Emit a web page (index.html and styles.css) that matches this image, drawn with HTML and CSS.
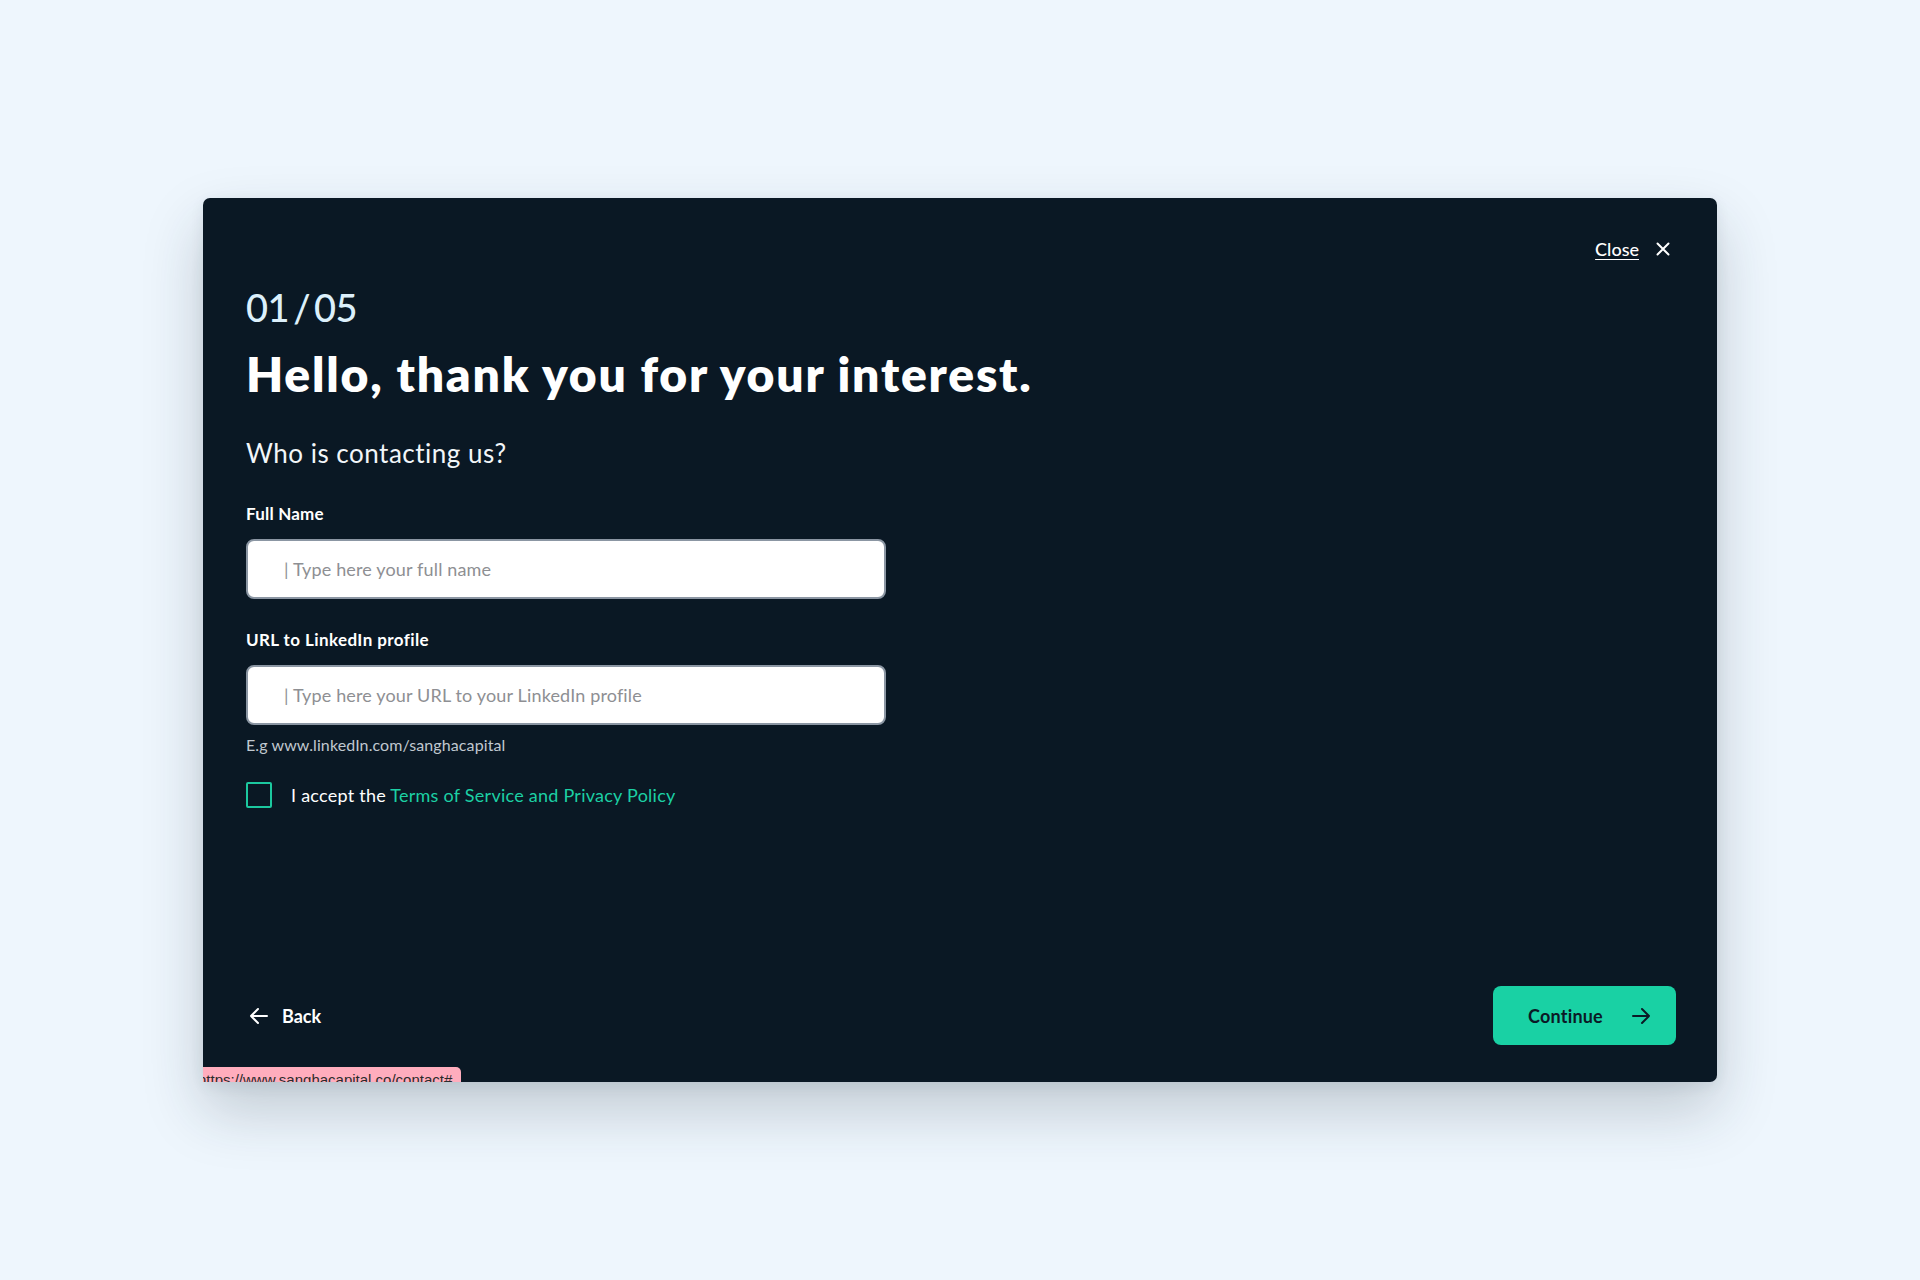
FILE: index.html
```html
<!DOCTYPE html>
<html lang="en">
<head>
<meta charset="utf-8">
<title>Contact – Sangha Capital</title>
<link rel="stylesheet" href="styles.css">
</head>
<body>
<div class="modal">
  <div class="close-row">
    <a class="close-link" href="#">Close</a>
    <svg class="close-icon" width="14" height="14" viewBox="0 0 14 14"><path d="M1.5 1.5 L12.5 12.5 M12.5 1.5 L1.5 12.5" stroke="#ffffff" stroke-width="2" stroke-linecap="round" fill="none"/></svg>
  </div>
  <div class="step">01 / 05</div>
  <h1 class="title">Hello, thank you for your interest.</h1>
  <h2 class="subtitle">Who is contacting us?</h2>

  <label class="field-label">Full Name</label>
  <div class="input"><span class="placeholder">| Type here your full name</span></div>

  <label class="field-label second">URL to LinkedIn profile</label>
  <div class="input"><span class="placeholder">| Type here your URL to your LinkedIn profile</span></div>
  <div class="hint">E.g www.linkedIn.com/sanghacapital</div>

  <div class="accept">
    <span class="checkbox"></span>
    <span class="accept-text">I accept the <a href="#" class="terms">Terms of Service and Privacy Policy</a></span>
  </div>

  <div class="footer">
    <a class="back" href="#">
      <svg width="20" height="18" viewBox="0 0 20 18"><path d="M18 9 H2 M9 2 L2 9 L9 16" stroke="#ffffff" stroke-width="2" stroke-linecap="round" stroke-linejoin="round" fill="none"/></svg>
      <span>Back</span>
    </a>
    <a class="continue" href="#">
      <span>Continue</span>
      <svg width="20" height="18" viewBox="0 0 20 18"><path d="M2 9 H18 M11 2 L18 9 L11 16" stroke="#0b1a26" stroke-width="2" stroke-linecap="round" stroke-linejoin="round" fill="none"/></svg>
    </a>
  </div>

  <div class="status"><span>https://www.sanghacapital.co/contact#</span></div>
</div>
</body>
</html>
```
FILE: styles.css
```css
* { box-sizing: border-box; }
html, body { margin: 0; padding: 0; }
body {
  background: #eef6fd;
  height: 100vh;
  display: flex;
  align-items: center;
  justify-content: center;
  font-family: "Lato", "Noto Sans", sans-serif;
}
.modal {
  position: relative;
  width: 1514px;
  height: 884px;
  background: #0a1824;
  border-radius: 7px;
  box-shadow: 0 28px 60px rgba(30, 45, 60, 0.22), 0 4px 14px rgba(30, 45, 60, 0.08);
  padding: 39px 41px 37px 43px;
  display: flex;
  flex-direction: column;
  color: #ffffff;
}
.close-row {
  display: flex;
  justify-content: flex-end;
  align-items: center;
  height: 24px;
  gap: 17px;
  margin-right: 6px;
}
.close-link {
  color: #ffffff;
  font-size: 18px;
  font-weight: 500;
  text-decoration: underline;
  text-underline-offset: 3px;
}
.close-icon { display: block; }
.step {
  margin-top: 23px;
  font-size: 38px;
  line-height: 46px;
  color: #dcf0fb;
  font-weight: 500;
  word-spacing: -5px;
  letter-spacing: -0.5px;
}
.title {
  margin: 16px 0 0;
  font-size: 48px;
  line-height: 56px;
  font-weight: 800;
  letter-spacing: 1.8px;
}
.subtitle {
  margin: 35px 0 0;
  font-size: 26px;
  line-height: 32px;
  font-weight: 400;
  color: #f2f6f9;
  letter-spacing: 0.5px;
}
.field-label {
  display: block;
  margin-top: 34px;
  font-size: 17px;
  line-height: 22px;
  font-weight: 700;
  letter-spacing: 0.2px;
}
.field-label.second { margin-top: 30px; letter-spacing: 0.4px; }
.input {
  margin-top: 14px;
  width: 640px;
  height: 60px;
  background: #ffffff;
  border: 2px solid #8b96a3;
  border-radius: 8px;
  display: flex;
  align-items: center;
  padding-left: 36px;
}
.placeholder {
  font-size: 18px;
  color: #8e8f93;
  letter-spacing: 0.15px;
}
.hint {
  margin-top: 10px;
  font-size: 16px;
  line-height: 20px;
  color: #c0c8d0;
  letter-spacing: 0.1px;
}
.accept {
  margin-top: 27px;
  display: flex;
  align-items: center;
  gap: 19px;
}
.checkbox {
  width: 26px;
  height: 26px;
  border: 2.5px solid #1cc89f;
  border-radius: 2px;
}
.accept-text {
  font-size: 18px;
  color: #ffffff;
  letter-spacing: 0.25px;
}
.terms {
  color: #1cd0a4;
  text-decoration: none;
}
.footer {
  margin-top: auto;
  display: flex;
  justify-content: space-between;
  align-items: center;
}
.back {
  display: flex;
  align-items: center;
  gap: 13px;
  color: #ffffff;
  text-decoration: none;
  font-size: 18px;
  font-weight: 700;
  margin-left: 3px;
}
.back svg, .continue svg { display: block; }
.continue {
  width: 183px;
  height: 59px;
  background: #19d1a4;
  border-radius: 8px;
  display: flex;
  align-items: center;
  justify-content: center;
  gap: 28px;
  color: #0b1a26;
  text-decoration: none;
  font-size: 18px;
  font-weight: 700;
  padding-left: 10px;
  letter-spacing: 0.2px;
}
.status {
  position: absolute;
  left: 0;
  bottom: 0;
  width: 258px;
  height: 15px;
  overflow: hidden;
  background: #ffadbd;
  border-top-right-radius: 5px;
  font-family: "Liberation Sans", Arial, sans-serif;
  font-size: 15px;
  line-height: 15px;
  color: #2b2b2b;
  white-space: nowrap;
}
.status span {
  display: block;
  margin-left: -5px;
  padding-top: 5px;
}
```
